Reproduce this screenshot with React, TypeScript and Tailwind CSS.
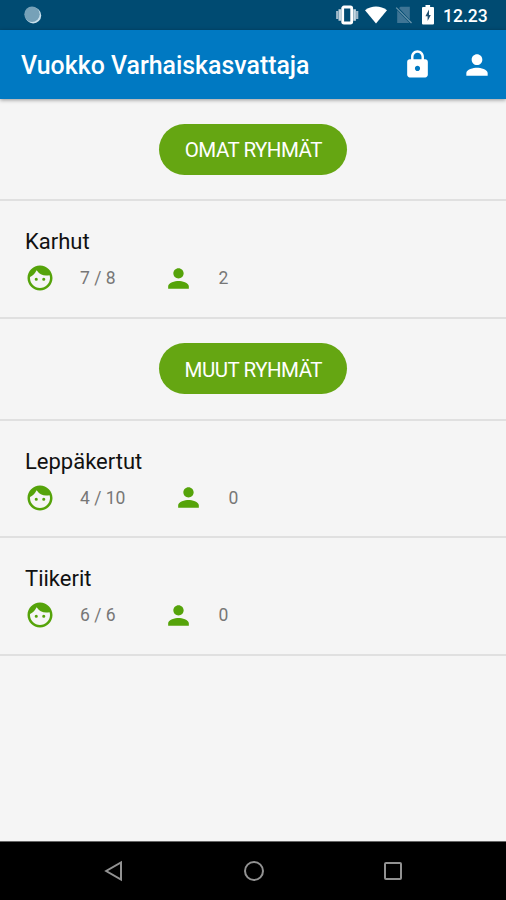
import type { ReactNode } from "react";
import { MdFace, MdLock, MdPerson } from "react-icons/md";

type Group = { name: string; children: string; staff: string };

const ownGroups: Group[] = [{ name: "Karhut", children: "7 / 8", staff: "2" }];
const otherGroups: Group[] = [
  { name: "Leppäkertut", children: "4 / 10", staff: "0" },
  { name: "Tiikerit", children: "6 / 6", staff: "0" },
];

function StatusBar() {
  return (
    <div className="flex h-[30px] shrink-0 items-center bg-[#004b72] pl-6 pr-[18px] text-white">
      <svg className="h-[18px] w-[18px]" viewBox="0 0 18 18">
        <circle cx="9.2" cy="9.4" r="8" fill="#c9e0ec" />
        <circle cx="8" cy="8.2" r="7.7" fill="#76a1b8" />
      </svg>
      <svg className="ml-auto h-[22px] w-[24px]" viewBox="0 0 24 22">
        <path d="M2.2 7v8M22.2 7v8" stroke="#9fb9c9" strokeWidth="2.2" />
        <path d="M4.8 5.2v11.6M19.6 5.2v11.6" stroke="#c5d6e0" strokeWidth="2.6" />
        <rect x="7.7" y="3" width="9" height="16" rx="1.3" fill="none" stroke="#fff" strokeWidth="2.8" />
      </svg>
      <svg className="ml-[6px] h-[18px] w-[22px]" viewBox="0 0 22 18">
        <path d="M0 4.2C6.4-.8 15.6-.8 22 4.2L11 17.6Z" fill="#fff" />
      </svg>
      <svg className="ml-[8px] h-[18px] w-[18px]" viewBox="0 0 18 18">
        <path d="M4 2 5.5.8h9.3v13Z" fill="#3f7595" />
        <path d="M2.2 4.2 14.6 17H2.2Z" fill="#3f7595" />
        <path d="M1.2 1.7 16.5 17" stroke="#6c97ad" strokeWidth="1.2" />
      </svg>
      <svg className="ml-[8px] h-[20px] w-[14px]" viewBox="0 0 14 20">
        <path d="M4.5 0h4.6v2H12a1 1 0 0 1 1 1v15.5a1 1 0 0 1-1 1H2a1 1 0 0 1-1-1V3a1 1 0 0 1 1-1h2.5Z" fill="#fff" />
        <path d="M8 4.6 4.4 11.2h2.2V16l3.2-6H8Z" fill="#204f70" />
      </svg>
      <span className="ml-[8px] w-[45px] whitespace-nowrap pt-[2px] text-[17.5px] font-medium">12.23</span>
    </div>
  );
}

function AppBar() {
  return (
    <header className="z-10 flex h-[69px] shrink-0 items-center bg-[#0079c2] pl-[21px] pr-[13px] text-white shadow-[0_1px_4px_rgba(0,0,0,0.4)]">
      <h1 className="pt-[2px] text-[24.9px] font-medium leading-8">Vuokko Varhaiskasvattaja</h1>
      <MdLock className="ml-auto size-[31px]" />
      <MdPerson className="ml-[28px] size-8" />
    </header>
  );
}

function Section({ children }: { children: ReactNode }) {
  return (
    <div className="flex h-[102px] items-center justify-center border-b-2 border-[#e0e0e0] pl-[0.6px] pt-[0.4px]">
      <button className="h-[51px] w-[188px] rounded-[25.5px] bg-[#65a612] pt-[2px] text-[20.5px] tracking-[-0.5px] text-white">{children}</button>
    </div>
  );
}

function GroupRow({ group }: { group: Group }) {
  return (
    <div className="h-[117.7px] border-b-2 border-[#e0e0e0] pl-[25px] pt-[26px]">
      <h2 className="text-[22px] leading-[29px] text-[#111]">{group.name}</h2>
      <div className="mt-[6.5px] flex items-center text-[17.5px] leading-[30px] text-[#777]">
        <MdFace className="size-[30px] text-[#55a30a]" />
        <span className="ml-[25px]">{group.children}</span>
        <MdPerson className="ml-[47.5px] size-[31px] text-[#55a30a]" />
        <span className="ml-[24.5px]">{group.staff}</span>
      </div>
    </div>
  );
}

function NavigationBar() {
  return (
    <nav className="flex h-[59px] shrink-0 items-center justify-between border-t border-[#666] bg-black pl-[103px] pr-[102px]">
      <svg className="size-[22px]" viewBox="0 0 22 22" fill="none" stroke="#929292" strokeWidth="2">
        <path d="M18 2.4v17.2L3.2 11Z" />
      </svg>
      <svg className="size-[22px]" viewBox="0 0 22 22" fill="none" stroke="#929292" strokeWidth="2">
        <circle cx="11" cy="11" r="9" />
      </svg>
      <svg className="size-[22px]" viewBox="0 0 22 22" fill="none" stroke="#929292" strokeWidth="2">
        <rect x="3" y="3" width="16" height="16" rx="1" />
      </svg>
    </nav>
  );
}

export default function App() {
  return (
    <div className="flex h-[900px] w-[506px] flex-col overflow-hidden bg-[#f5f5f5] font-['Roboto',sans-serif]">
      <StatusBar />
      <AppBar />
      <main className="flex-1">
        <Section>OMAT RYHMÄT</Section>
        {ownGroups.map((group) => (
          <GroupRow key={group.name} group={group} />
        ))}
        <Section>MUUT RYHMÄT</Section>
        {otherGroups.map((group) => (
          <GroupRow key={group.name} group={group} />
        ))}
      </main>
      <NavigationBar />
    </div>
  );
}
